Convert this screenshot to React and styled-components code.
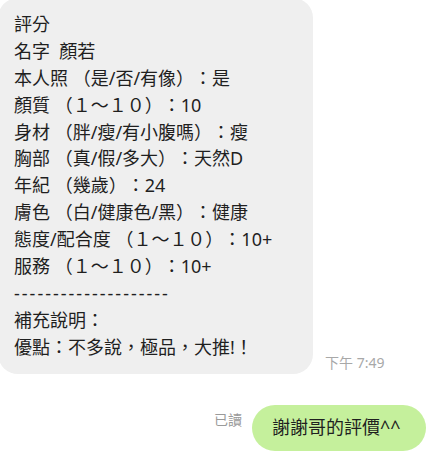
import React from 'react';
import styled, { createGlobalStyle } from 'styled-components';

const GlobalStyle = createGlobalStyle`
  html, body {
    margin: 0;
    padding: 0;
    background: #ffffff;
  }
  body {
    font-family: "Noto Sans", "Noto Sans CJK TC", sans-serif;
    text-spacing-trim: space-all;
    font-feature-settings: "chws" 0, "halt" 0;
    overflow: hidden;
  }
`;

const Chat = styled.div`
  width: 426px;
  height: 456px;
  display: flex;
  flex-direction: column;
  overflow: hidden;
`;

const Row = styled.div`
  display: flex;
  align-items: ${(p) => (p.mine ? 'flex-start' : 'flex-end')};
  justify-content: ${(p) => (p.mine ? 'flex-end' : 'flex-start')};
  margin-top: ${(p) => p.top || 0}px;
`;

const Bubble = styled.div`
  box-sizing: border-box;
  width: ${(p) => p.w}px;
  margin-left: ${(p) => (p.mine ? 0 : -2)}px;
  margin-top: ${(p) => (p.mine ? 0 : -2)}px;
  padding: ${(p) => (p.mine ? '0 0 0 20px' : '13px 0 13px 16px')};
  height: ${(p) => (p.mine ? '46px' : 'auto')};
  display: ${(p) => (p.mine ? 'flex' : 'block')};
  align-items: center;
  background: ${(p) => (p.mine ? '#c5f09c' : '#efefef')};
  border-radius: ${(p) => (p.mine ? '23px' : '20px')};
  color: #1f1f1f;
  font-size: 18px;
  line-height: 26.9px;
  white-space: pre;
`;

const Line = styled.div`
  height: 26.9px;
  letter-spacing: ${(p) => (p.rule ? '2px' : 'normal')};
`;

const Meta = styled.span`
  font-size: 14px;
  line-height: 20px;
  color: ${(p) => (p.read ? '#9a9a9a' : '#a8a8a8')};
  margin: ${(p) => (p.read ? '5px 10px 0 0' : '0 0 1px 12px')};
`;

const RULE = '--------------------';

const lines = [
  '評分',
  '名字  顏若',
  '本人照 （是/否/有像）：是',
  '顏質 （１～１０）：10',
  '身材 （胖/瘦/有小腹嗎）：瘦',
  '胸部 （真/假/多大）：天然D',
  '年紀 （幾歲）：24',
  '膚色 （白/健康色/黑）：健康',
  '態度/配合度 （１～１０）：10+',
  '服務 （１～１０）：10+',
  RULE,
  '補充說明：',
  '優點：不多說，極品，大推!！',
];

export default function App() {
  return (
    <Chat>
      <GlobalStyle />
      <Row>
        <Bubble w={315}>
          {lines.map((t, i) => (
            <Line key={i} rule={t === RULE}>{t}</Line>
          ))}
        </Bubble>
        <Meta>下午 7:49</Meta>
      </Row>
      <Row mine top={31}>
        <Meta read>已讀</Meta>
        <Bubble mine w={174}>謝謝哥的評價^^</Bubble>
      </Row>
    </Chat>
  );
}
